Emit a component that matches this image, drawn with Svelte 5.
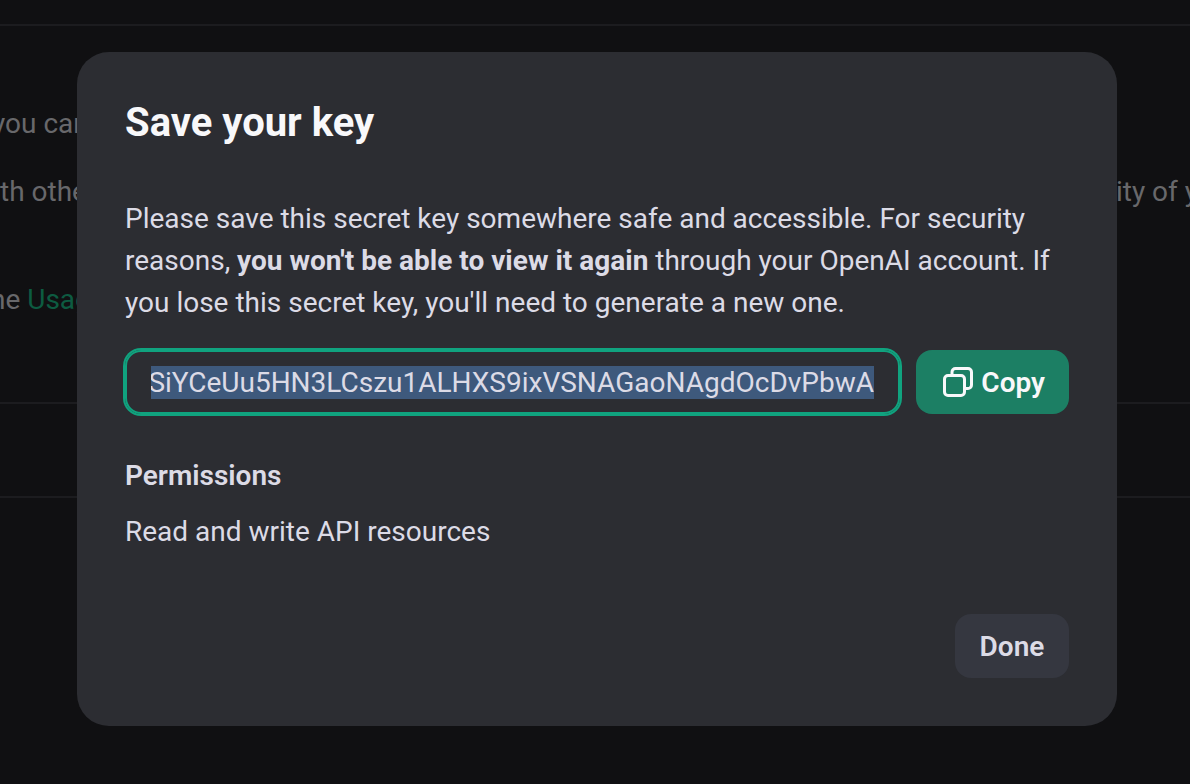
<script>
  import { onMount } from 'svelte';

  const secret = 'sk-SiYCeUu5HN3LCszu1ALHXS9ixVSNAGaoNAgdOcDvPbwA';
  let field;

  function selectKey() {
    field.focus();
    field.select();
    field.scrollLeft = field.scrollWidth;
  }

  onMount(selectKey);
</script>

<div class="page">
  <header class="topbar"></header>
  <main class="content">
    <p class="line first"><span>you can</span></p>
    <p class="line second"><span>th other</span><span class="tail">ity of y</span></p>
    <p class="line third"><span>he <a href="#usage">Usage</a></span></p>
  </main>
  <div class="row"></div>
</div>

<div class="overlay">
  <div class="dialog" role="dialog" aria-modal="true" aria-labelledby="dialog-title">
    <h1 id="dialog-title">Save your key</h1>
    <p class="message">
      Please save this secret key somewhere safe and accessible. For security reasons,
      <strong>you won't be able to view it again</strong> through your OpenAI account. If you lose
      this secret key, you'll need to generate a new one.
    </p>
    <div class="key">
      <input bind:this={field} type="text" readonly value={secret} aria-label="Secret key" />
      <button class="copy" type="button" onclick={selectKey}>
        <svg width="30" height="30" viewBox="0 0 30 30" fill="none" stroke="currentColor" stroke-width="3" aria-hidden="true">
          <rect x="1.5" y="8.5" width="20" height="20" rx="3.5" />
          <path d="M9 8.500V5a3.500 3.500 0 0 1 3.500-3.500H25A3.500 3.500 0 0 1 28.500 5v13a3.500 3.500 0 0 1-3.500 3.500h-3.500" />
        </svg>
        <span>Copy</span>
      </button>
    </div>
    <h2>Permissions</h2>
    <p class="scope">Read and write API resources</p>
    <div class="actions">
      <button class="done" type="button"><span>Done</span></button>
    </div>
  </div>
</div>

<style>
  :global(body) {
    margin: 0;
    background: #101012;
    overflow: hidden;
    font-family: Roboto, 'Liberation Sans', sans-serif;
  }
  .page {
    font-size: 28px;
    line-height: 42px;
    color: #68686b;
    overflow: hidden;
  }
  .topbar {
    height: 24px;
    border-bottom: 2px solid #1c1c1f;
  }
  .content {
    padding: 77px 0 81px;
    border-bottom: 2px solid #1c1c1f;
  }
  .line {
    display: flex;
    justify-content: space-between;
    margin: 0;
    white-space: nowrap;
  }
  .first { margin-left: -8px; }
  .second { margin-top: 26px; }
  .third { margin: 66px 0 0 -10px; }
  .tail { margin-right: -8px; }
  .line a {
    color: #0d5b41;
    text-decoration: none;
  }
  .row {
    height: 92px;
    border-bottom: 2px solid #1c1c1f;
  }
  .overlay {
    position: fixed;
    inset: 0;
    padding: 52px 73px 58px 77px;
  }
  .dialog {
    padding: 47px 48px 48px;
    border-radius: 32px;
    background: #2c2d32;
    color: #dcdbe6;
    font-size: 28px;
    line-height: 42px;
  }
  h1 {
    margin: 0 0 51px;
    color: #f8f8fa;
    font-size: 40px;
    line-height: 48px;
    font-weight: 700;
  }
  .message {
    margin: 0 0 26px;
  }
  .key {
    display: flex;
    gap: 16px;
  }
  input {
    flex: 1;
    min-width: 0;
    height: 64px;
    box-sizing: border-box;
    padding: 1px 24px 0;
    border: 2px solid #10a37f;
    border-radius: 16px;
    box-shadow: 0 0 0 2px #10a37f;
    outline: none;
    background: transparent;
    color: #dcdbe6;
    font: inherit;
    line-height: 36px;
  }
  input::selection {
    background: rgba(62, 89, 124, 0.996);
    color: #dcdbe6;
  }
  button {
    display: flex;
    align-items: center;
    justify-content: center;
    height: 64px;
    border: 0;
    border-radius: 16px;
    padding: 0 24px;
    font: inherit;
    font-weight: 600;
  }
  button span {
    padding-top: 2px;
  }
  .copy {
    gap: 8px;
    padding-left: 27px;
    background: #1c7f64;
    color: #f8f8fa;
  }
  h2 {
    margin: 41px 0 14px;
    font-size: 28px;
    line-height: 42px;
    font-weight: 600;
  }
  .scope { margin: 0; }
  .actions {
    display: flex;
    justify-content: flex-end;
    margin-top: 61px;
  }
  .done {
    min-width: 114px;
    background: #353740;
    color: #dcdbe6;
  }
</style>
